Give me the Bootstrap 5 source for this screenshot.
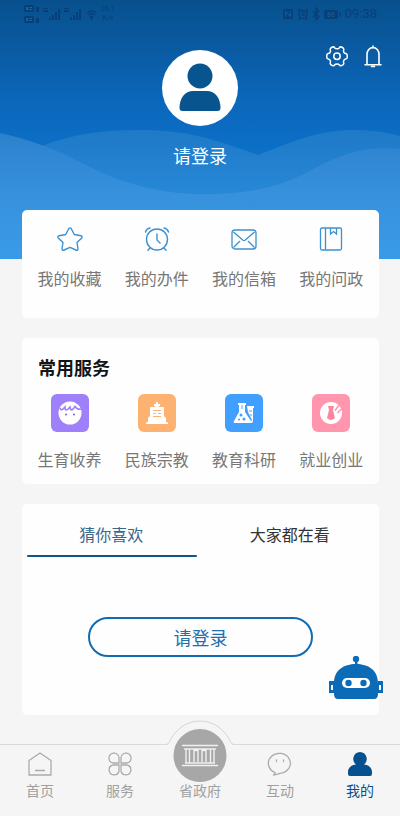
<!DOCTYPE html>
<html lang="zh-CN">
<head>
<meta charset="utf-8">
<meta name="viewport" content="width=device-width, initial-scale=1">
<title>我的</title>
<link href="https://cdn.jsdelivr.net/npm/bootstrap@5.3.0/dist/css/bootstrap.min.css" rel="stylesheet">
<style>
  body { background: #f5f5f5; font-family: "Noto Sans CJK SC", sans-serif; font-size: 16px; line-height: 24px; color: #777; }
  a, button { color: inherit; text-decoration: none; }
  svg { display: block; }
  .hero { background: linear-gradient(#07508d 0, #0a5ba2 50px, #0b66b9 95px, #0c72ca 165px, #0c72ca 100%); padding-bottom: 92px; }
  .waves { z-index: 0; }
  .status-bar { height: 26px; padding: 2px 23px 0 24px; color: #083f76; }
  .net-speed { font: 7px/9px Roboto, sans-serif; }
  .clock { font: 13px/16px Roboto, sans-serif; }
  .hero-tools { height: 24px; padding-right: 18px; margin-top: 19px; }
  .avatar { width: 76px; height: 76px; margin-top: -19px; }
  .login-title { font-size: 18px; line-height: 24px; margin-top: 17px; }
  .content { margin-top: -49px; padding: 0 21px 28px 22px; gap: 20px; }
  .panel { background: #fefefe; border-radius: 5px; }
  .quick { padding-top: 17px; padding-bottom: 28px; }
  .quick a, .services a { gap: 15px; }
  .services { padding-bottom: 13px; }
  .section-title { font-size: 18px; line-height: 24px; color: #151515; padding: 17px 16px 15px; }
  .feed { height: 211px; }
  .feed-tabs button { color: #333; padding: 18px 0 7px; }
  .feed-tabs button::after { content: ""; display: block; height: 2px; margin: 9px 4px 0 5px; border-radius: 1px; }
  .feed-tabs button.active { color: #3a678e; }
  .feed-tabs button.active::after { background: #0c558f; }
  .login-btn, .login-btn:hover { width: 63%; height: 40px; margin-top: 53px; font-size: 18px; line-height: 24px; color: #236fac; border: 2px solid #126cb0; background: #fefefe; }
  .robot { right: -4px; bottom: 15px; }
  .tabbar { height: 72px; border-top: 1px solid #d8d8d8; background: #f5f5f5; font-size: 14px; line-height: 20px; color: #a0a0a0; padding-top: 7px; }
  .tabbar a { gap: 4px; }
  .tabbar a.active { color: #07508f; }
  .tab-icon { width: 26px; height: 24px; }
  .gov-mark { left: 50%; top: -30px; margin-left: -34px; }
</style>
<script src="https://cdn.jsdelivr.net/npm/bootstrap@5.3.0/dist/js/bootstrap.bundle.min.js"></script>
</head>
<body class="d-flex flex-column min-vh-100">

<header class="hero position-relative">
  <svg class="waves position-absolute top-0 start-0 w-100 h-100" viewBox="0 0 400 259" preserveAspectRatio="none" aria-hidden="true">
    <defs>
      <linearGradient id="w1" x1="0" y1="130" x2="0" y2="205" gradientUnits="userSpaceOnUse"><stop offset="0" stop-color="#1f79c7"/><stop offset="1" stop-color="#288bda"/></linearGradient>
      <linearGradient id="w2" x1="0" y1="130" x2="0" y2="259" gradientUnits="userSpaceOnUse"><stop offset="0" stop-color="#2c80cc"/><stop offset=".5" stop-color="#3791dc"/><stop offset="1" stop-color="#399be8"/></linearGradient>
    </defs>
    <path fill="url(#w1)" d="M0 160Q20 154 42 146C75 133 105 130 140 130C190 130 215 140 258 155C300 139 320 130 355 130Q380 130 400 136V259H0z"/>
    <path fill="url(#w2)" d="M0 133C65 147 85 170 130 183C170 195 205 197 250 191C290 184 305 173 325 163C350 151 370 146 400 149V259H0z"/>
  </svg>
  <div class="position-relative d-flex flex-column">
    <div class="status-bar d-flex align-items-center justify-content-between">
      <div class="d-flex align-items-center gap-1">
        <svg width="58" height="20" fill="currentColor" aria-hidden="true">
          <rect x="0" y="1" width="10" height="7" rx="2"/><rect x="0" y="12" width="10" height="7" rx="2"/>
          <path d="M2 3h2v3H2zM5 3h3v1H5zM5 5h3v1H5zM2 14h2v3H2zM5 14h3v1H5zM5 16h3v1H5z" fill="#1763a8"/>
          <path d="M12 3h3v5h-3zM12 14h3v5h-3zM19 4h5v1h-5zM19 6h5v2h-5zM40 4h5v1h-5zM40 6h5v2h-5z"/>
          <path d="M25 13h2v3h-2zM28 11h2v5h-2zM31 8h2v8h-2zM34 5h2v11h-2zM46 13h2v3h-2zM49 11h2v5h-2zM52 8h2v8h-2zM55 5h2v11h-2z"/>
        </svg>
        <svg width="11" height="11" viewBox="0 0 11 11" fill="none" stroke="currentColor" stroke-width="1.400" aria-hidden="true"><path d="M1 4Q5.500 0 10 4M2.500 6Q5.500 3.500 8.500 6M4 8Q5.500 7 7 8"/><circle cx="5.500" cy="9.500" r=".6"/></svg>
        <div class="net-speed text-center">26.1<br>K/s</div>
      </div>
      <div class="d-flex align-items-center gap-1">
        <svg width="58" height="14" fill="none" stroke="currentColor" stroke-width="1.300" aria-hidden="true">
          <rect x="0" y="2" width="10" height="10" rx="1" fill="currentColor" stroke="none"/><path d="M2.500 10V4.500L7.500 9.500V4" stroke="#0b5aa0"/>
          <circle cx="20" cy="7.500" r="4"/><path d="M20 5v3h2M15 4l2-2M25 4l-2-2M17 11l-1 2M23 11l1 2M30 4l6 6-3 3V1l3 3-6 6"/>
          <rect x="41" y="3" width="14" height="9" rx="2" fill="currentColor" stroke="none"/><path d="M57 5v5"/><text x="44" y="10" font-family="Roboto" font-size="7" fill="#1763a8" stroke="none">86</text>
        </svg>
        <span class="clock">09:38</span>
      </div>
    </div>
    <div class="hero-tools d-flex justify-content-end gap-3">
      <button class="btn p-0 border-0" type="button" aria-label="设置">
        <svg width="22" height="24" viewBox="0 0 22 24" fill="none" stroke="#fff" stroke-width="1.500" stroke-linejoin="round"><path d="M6.500 2Q8 1.500 8.700 2.800Q9.200 3.700 11 3.700T13.300 2.800Q14 1.500 15.500 2L17.200 3Q18.300 4 17.600 5.300Q17.200 6.300 18 7.500Q18.700 8.500 19.700 8.600Q21.200 8.800 21.200 10.300V12.300Q21.200 13.800 19.700 14Q18.700 14.100 18 15.200Q17.200 16.400 17.600 17.300Q18.300 18.600 17.200 19.600L15.500 20.600Q14 21.200 13.300 19.900Q12.800 19 11 19T8.700 19.900Q8 21.200 6.500 20.600L4.800 19.600Q3.700 18.600 4.400 17.300Q4.800 16.400 4 15.200Q3.300 14.100 2.300 14Q.8 13.800 .8 12.300V10.300Q.8 8.800 2.300 8.600Q3.300 8.500 4 7.500Q4.800 6.300 4.400 5.300Q3.700 4 4.800 3z"/><circle cx="11" cy="11.300" r="3.200"/></svg>
      </button>
      <button class="btn p-0 border-0" type="button" aria-label="通知">
        <svg width="18" height="24" viewBox="0 0 18 24" fill="none" stroke="#fff" stroke-width="1.600"><path d="M3 19.500V9.500a6 7 0 0 1 12 0v10M1 19.800h16M9 1v2M7.500 21.500h3" stroke-linecap="round"/></svg>
      </button>
    </div>
    <a class="avatar d-block rounded-circle bg-white mx-auto" href="#" aria-label="头像">
      <svg width="76" height="76" fill="#07548f"><circle cx="38" cy="26" r="12.500"/><path d="M17.500 58C17.500 48 23 41 31 41H45C53 41 58.500 48 58.500 58Q58.500 61 55.500 61H20.500Q17.500 61 17.500 58z"/></svg>
    </a>
    <a class="login-title text-white text-center" href="#">请登录</a>
  </div>
</header>

<main class="content position-relative d-flex flex-column flex-grow-1">
  <nav class="panel quick px-1 d-flex text-center" aria-label="我的事项">
    <a class="col-3 d-flex flex-column align-items-center" href="#">
      <svg width="26" height="24" viewBox="0 0 26 24" fill="none" stroke="#3c91d0" stroke-width="1.400" stroke-linejoin="round"><path d="M11.700 1.700Q13 0 14.300 1.700L17.300 7.500L23.800 8.700Q26 9.300 24.500 11.200L20 15.500L21 21.500Q21 24 18.800 23L13 20.300L7.200 23Q5 24 5 21.500L6 15.500L1.500 11.200Q0 9.300 2.200 8.700L8.700 7.500z"/></svg>
      <span>我的收藏</span></a>
    <a class="col-3 d-flex flex-column align-items-center" href="#">
      <svg width="26" height="24" viewBox="0 0 26 24" fill="none" stroke="#3c91d0" stroke-width="1.400" stroke-linecap="round"><circle cx="13" cy="12.500" r="10.500"/><path d="M13 7v6l3 3M1.500 5Q2.500 1.500 6 1M24.500 5Q23.500 1.500 20 1M6 21l-2 2.300M20 21l2 2.300"/></svg>
      <span>我的办件</span></a>
    <a class="col-3 d-flex flex-column align-items-center" href="#">
      <svg width="26" height="24" viewBox="0 0 26 24" fill="none" stroke="#3c91d0" stroke-width="1.300"><rect x="1" y="3" width="24" height="19" rx="3"/><path d="M2.500 5L12 13.300Q13 14 14 13.300L23.500 5M2.500 20.500L9 14M23.500 20.500L17 14"/></svg>
      <span>我的信箱</span></a>
    <a class="col-3 d-flex flex-column align-items-center" href="#">
      <svg width="26" height="24" viewBox="0 0 26 24" fill="none" stroke="#3c91d0" stroke-width="1.300"><rect x="2.500" y="1" width="21" height="22" rx="1.500"/><path d="M7.500 1v22M12.500 1v6l3-2.500 3 2.500V1"/></svg>
      <span>我的问政</span></a>
  </nav>

  <section class="panel">
    <h2 class="section-title fw-bold m-0">常用服务</h2>
    <div class="services px-1 d-flex text-center">
      <a class="col-3 d-flex flex-column align-items-center" href="#">
        <svg width="38" height="38"><rect width="38" height="38" rx="6" fill="#9e80fa"/><circle cx="19" cy="19" r="11.500" fill="#fff"/><path d="M9 14Q10 18 14 13Q14 19 19 13Q20 19 24 12.500Q26 16 31 15" fill="none" stroke="#9e80fa" stroke-width="1.600"/><circle cx="15" cy="20.500" r="1" fill="#8060cf"/><circle cx="23" cy="20.500" r="1" fill="#8060cf"/></svg>
        <span>生育收养</span></a>
      <a class="col-3 d-flex flex-column align-items-center" href="#">
        <svg width="38" height="38"><rect width="38" height="38" rx="6" fill="#fdb272"/><path d="M18 8h2v2h2v2h-1v1h4q1 0 1 1v8l2 2v4h1q1 0 1 2H8q0-2 1-2h1v-4l2-2v-8q0-1 1-1h4v-1h-1v-2h2z" fill="#fff"/><path d="M15 16.500h8M15 19.500h3M20 19.500h3M15 22.500h8" stroke="#fdb272" stroke-width="1.200"/></svg>
        <span>民族宗教</span></a>
      <a class="col-3 d-flex flex-column align-items-center" href="#">
        <svg width="38" height="38"><rect width="38" height="38" rx="6" fill="#409fff"/><path d="M13 9h8v2h-1v7l6 9q1 2-1 2H10q-2 0-1-2l5-9v-7h-1zM22 12h7v2h-1v13q0 2-2 2h-1l2-3-4-8z" fill="#fff"/><path d="M16 11h2v4h-2z" fill="#a8d2ff"/><circle cx="16" cy="21" r="1.500" fill="#409fff"/><circle cx="19" cy="25" r="1.500" fill="#409fff"/><circle cx="14" cy="25.500" r="1" fill="#409fff"/><path d="M24 17h3M25 21h2" stroke="#409fff"/></svg>
        <span>教育科研</span></a>
      <a class="col-3 d-flex flex-column align-items-center" href="#">
        <svg width="38" height="38"><rect width="38" height="38" rx="6" fill="#ff96ad"/><circle cx="19" cy="19" r="11" fill="#fff"/><path d="M16 12h6l-1 4 2 8q-4 4-8 0l2-8z" fill="#ff869f"/><path d="M23 16.500L28 10M25.500 19L31 13.500" stroke="#ff96ad" stroke-width="1.500"/></svg>
        <span>就业创业</span></a>
    </div>
  </section>

  <section class="panel feed position-relative">
    <div class="feed-tabs d-flex" role="tablist">
      <button class="active col-6 border-0 bg-transparent px-0" type="button" role="tab" aria-selected="true">猜你喜欢</button>
      <button class="col-6 border-0 bg-transparent px-0" type="button" role="tab" aria-selected="false">大家都在看</button>
    </div>
    <button class="login-btn btn rounded-pill d-block mx-auto p-0" type="button">请登录</button>
    <button class="robot btn p-0 border-0 position-absolute" type="button" aria-label="智能客服">
      <svg width="54" height="44" viewBox="0 0 54 44" fill="#0c6bb7"><circle cx="27" cy="3" r="3.200"/><path d="M26 3h2.500v8H26zM5 27C5 14 15 8 27 8S49 14 49 27V38Q49 43 45 43H9Q5 43 5 38z"/><path d="M0 25h5v12H0zM49 25h5v12h-5z"/><path d="M2 29h2v5H2zM50 29h2v5h-2z" fill="#fff"/><rect x="13" y="22" width="28" height="10" rx="5" fill="#fff"/><circle cx="19.500" cy="27" r="3.200"/><circle cx="34.500" cy="27" r="3.200"/></svg>
    </button>
  </section>
</main>

<nav class="tabbar position-relative d-flex flex-shrink-0" aria-label="主导航">
  <svg class="gov-mark position-absolute" width="68" height="68" viewBox="0 0 68 68" aria-hidden="true">
    <path d="M0 29.500Q2.500 29.500 3.500 26.500Q5 23 9 18A32 32 0 0 1 59 18Q63 23 64.500 26.500Q65.500 29.500 68 29.500V32H0z" fill="#f5f5f5"/>
    <path d="M0 29.500Q2.500 29.500 3.500 26.500Q5 23 9 18A32 32 0 0 1 59 18Q63 23 64.500 26.500Q65.500 29.500 68 29.500" fill="none" stroke="#d5d5d5"/>
    <circle cx="34" cy="40.500" r="26.500" fill="#a7a7a7"/>
    <path d="M16 30.500h36M18 34h32M20 34v14M23.500 34v14M44.500 34v14M48 34v14M28 47V35.500h4V47M36 47V35.500h4V47M19 48h30M16 50.500h36" fill="none" stroke="#f0f0f0" stroke-width="1.400"/>
  </svg>
  <a class="col d-flex flex-column align-items-center" href="#">
    <svg class="tab-icon" viewBox="0 0 26 24" fill="none" stroke="#ababab" stroke-width="1.300" stroke-linejoin="round"><path d="M2 8.500L13 1L24 8.500V23H2zM8 18.500h10"/></svg>
    <span>首页</span></a>
  <a class="col d-flex flex-column align-items-center" href="#">
    <svg class="tab-icon" viewBox="0 0 26 24" fill="none" stroke="#ababab" stroke-width="1.300"><path d="M12 11H6a5 5 0 1 1 6-5zM14 11V6a5 5 0 1 1 6 5zM12 13v6a5 5 0 1 1-6-6zM14 13h6a5 5 0 1 1-6 6z"/></svg>
    <span>服务</span></a>
  <a class="col d-flex flex-column align-items-center" href="#">
    <span class="tab-icon"></span>
    <span class="position-relative">省政府</span></a>
  <a class="col d-flex flex-column align-items-center" href="#">
    <svg class="tab-icon" viewBox="0 0 26 24" fill="none" stroke="#ababab" stroke-width="1.300" stroke-linecap="round"><path d="M8 20.500A11 10 0 1 1 13 21.300Q10 22.500 6 23Q8.500 22 8 20.500zM9.500 8v1.500M16.500 8v1.500"/></svg>
    <span>互动</span></a>
  <a class="active col d-flex flex-column align-items-center" href="#" aria-current="page">
    <svg class="tab-icon" viewBox="0 0 26 24" fill="#07508f"><path d="M13 0a7 7 0 0 1 4 12.500C22 13 25 16 25 20V22Q25 24 23 24H3Q1 24 1 22V20C1 16 4 13 9 12.500A7 7 0 0 1 13 0z"/></svg>
    <span>我的</span></a>
</nav>
</body>
</html>
